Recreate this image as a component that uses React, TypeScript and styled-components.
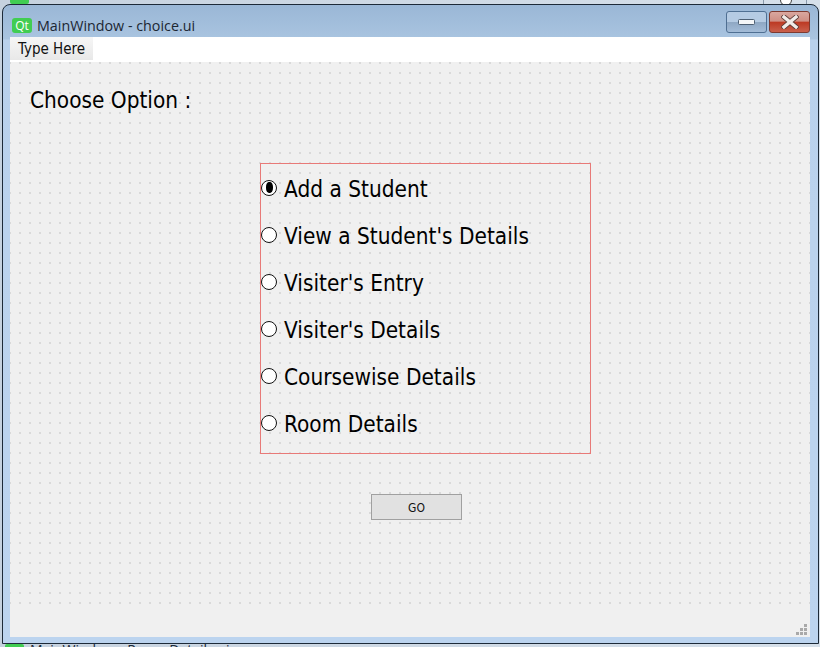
import styled, { createGlobalStyle } from "styled-components";

const GlobalStyle = createGlobalStyle`
  html, body {
    margin: 0;
    padding: 0;
    background: #d9e4ef;
  }
`;

const options = [
  "Add a Student",
  "View a Student's Details",
  "Visiter's Entry",
  "Visiter's Details",
  "Coursewise Details",
  "Room Details",
];

const Desktop = styled.div`
  position: relative;
  width: 820px;
  height: 647px;
  box-sizing: border-box;
  padding: 4px 1px 3px 2px;
  overflow: hidden;
  background: linear-gradient(90deg, #c6d2df, #d6e0ea);
`;

const BehindIcon = styled.div`
  position: absolute;
  left: 10px;
  top: -6px;
  width: 19px;
  height: 10px;
  border-radius: 2px;
  background: #41cd52;
`;

const BehindTitle = styled.div`
  position: absolute;
  left: 30px;
  top: 640px;
  font: 14px "Open Sans", sans-serif;
  color: #1a2a3a;
  white-space: nowrap;
`;

const BehindBadge = styled(BehindIcon)`
  top: 644px;
  left: 5px;
`;

const BehindTab = styled.div`
  position: absolute;
  left: 763px;
  top: 0;
  width: 42px;
  height: 4px;
  border-left: 1px solid #8a9aab;
  border-right: 1px solid #8a9aab;
`;

const BehindClose = styled.div`
  position: absolute;
  left: 780px;
  top: -6px;
  width: 10px;
  height: 10px;
  border: 1px solid #444;
  border-radius: 50%;
  background: #fff;
`;

const Frame = styled.div`
  position: relative;
  z-index: 1;
  height: 100%;
  box-sizing: border-box;
  display: flex;
  flex-direction: column;
  padding: 0 8px 6px 7px;
  border: 1px solid #1d2a38;
  border-radius: 8px 8px 0 0;
  background: linear-gradient(180deg, #9ab7d6 0, #a9c4e0 34px, #b9d1ec 35px, #bcd4ef 100%);
`;

const TitleBar = styled.div`
  height: 32px;
  flex-shrink: 0;
  display: flex;
  align-items: center;
  padding: 9px 0 0 2px;
  box-sizing: border-box;
`;

const QtBadge = styled.span`
  width: 20px;
  height: 15px;
  margin-right: 5px;
  border-radius: 3px;
  background: #41cd52;
  color: #fff;
  font: 12px "Open Sans", sans-serif;
  display: flex;
  align-items: center;
  justify-content: center;
`;

const WindowTitle = styled.span`
  font: 14.3px "Open Sans", sans-serif;
  color: #1c2733;
  flex: 1;
`;

const CaptionButtons = styled.div`
  display: flex;
  gap: 2px;
  margin-top: -7px;
`;

const MinButton = styled.div`
  width: 41px;
  height: 22px;
  box-sizing: border-box;
  border: 1px solid #4f6f92;
  border-radius: 3px;
  background: linear-gradient(180deg, #b5cbe3 0, #b5cbe3 48%, #8fa8c4 52%, #a3bcd8 100%);
  display: flex;
  align-items: center;
  justify-content: center;
`;

const CloseButton = styled(MinButton)`
  border-color: #7d3a30;
  background: linear-gradient(180deg, #d9a79f 0, #cf8f84 45%, #bd3a24 52%, #c9604c 100%);
`;

const Menu = styled.div`
  height: 25px;
  flex-shrink: 0;
  background: #fff;
  display: flex;
`;

const MenuItem = styled.div`
  width: 83px;
  box-sizing: border-box;
  padding: 3px 0 0 8px;
  height: 23px;
  background: linear-gradient(180deg, #f6f6f6, #e8e8e8);
  font: 15px "DejaVu Sans Condensed", "DejaVu Sans", sans-serif;
  color: #111;
`;

const Canvas = styled.div`
  flex: 1;
  display: flex;
  flex-direction: column;
  padding: 0 20px;
  background-color: #f0f0f0;
  background-image: radial-gradient(circle at 1px 1px, #c2c2c2 0.5px, transparent 0.9px);
  background-size: 10px 10px;
  background-position: -1px 0;
`;

const Heading = styled.h1`
  margin: 23px 0 0;
  font: 400 22.4px/30px "DejaVu Sans Condensed", "DejaVu Sans", sans-serif;
  color: #000;
`;

const OptionBox = styled.div`
  width: 331px;
  height: 291px;
  box-sizing: border-box;
  margin: 48px 0 0 230px;
  border: 1px solid #e87a78;
  display: flex;
  flex-direction: column;
`;

const OptionRow = styled.label`
  height: 47px;
  display: flex;
  align-items: center;
  flex-shrink: 0;
  font: 22.4px "DejaVu Sans Condensed", "DejaVu Sans", sans-serif;
  color: #000;
`;

const OptionText = styled.span`
  margin-top: 2px;
  letter-spacing: 0.02px;
`;

const Dot = styled.span`
  width: 14px;
  height: 14px;
  margin: 0 7px 0 0;
  border: 1px solid #111;
  border-radius: 50%;
  background: #fff;
  display: flex;
  align-items: center;
  justify-content: center;
`;

const DotFill = styled.span`
  width: 7px;
  height: 11px;
  border-radius: 3px 3px 3px 3px / 5px;
  background: #000;
`;

const GoButton = styled.button`
  width: 91px;
  height: 26px;
  margin: 40px 0 0 341px;
  padding: 2px 0 0;
  border: 1px solid #a0a0a0;
  background: #e1e1e1;
  font: 12px "DejaVu Sans Condensed", "DejaVu Sans", sans-serif;
  color: #111;
`;

const StatusBar = styled.div`
  position: relative;
  height: 25px;
  flex-shrink: 0;
  background: #f0f0f0;
`;

const Grip = styled.svg`
  position: absolute;
  right: 3px;
  bottom: 2px;
`;

export default function App() {
  return (
    <Desktop>
      <GlobalStyle />
      <BehindIcon />
      <BehindTab />
      <BehindClose />
      <BehindBadge />
      <BehindTitle>MainWindow - Room Details.ui</BehindTitle>
      <Frame>
        <TitleBar>
          <QtBadge>Qt</QtBadge>
          <WindowTitle>MainWindow - choice.ui</WindowTitle>
          <CaptionButtons>
            <MinButton>
              <svg width="17" height="6" viewBox="0 0 17 6">
                <rect x="0.5" y="0.5" width="16" height="5" rx="1" fill="#f4f6f8" stroke="#4d5f73" />
              </svg>
            </MinButton>
            <CloseButton>
              <svg width="18" height="14" viewBox="0 0 18 14">
                <path d="M3 2 L15 12 M15 2 L3 12" stroke="#5a3a36" strokeWidth="5" strokeLinecap="square" />
                <path d="M3 2 L15 12 M15 2 L3 12" stroke="#f1ebe8" strokeWidth="3.4" strokeLinecap="square" />
              </svg>
            </CloseButton>
          </CaptionButtons>
        </TitleBar>
        <Menu>
          <MenuItem>Type Here</MenuItem>
        </Menu>
        <Canvas>
          <Heading>Choose Option :</Heading>
          <OptionBox>
            {options.map((option, index) => (
              <OptionRow key={option}>
                <Dot>{index === 0 && <DotFill />}</Dot>
                <OptionText>{option}</OptionText>
              </OptionRow>
            ))}
          </OptionBox>
          <GoButton>GO</GoButton>
        </Canvas>
        <StatusBar>
          <Grip width="11" height="11" viewBox="0 0 11 11" fill="#a9a9a9">
            <rect x="8" y="0" width="3" height="3" />
            <rect x="4" y="4" width="3" height="3" />
            <rect x="8" y="4" width="3" height="3" />
            <rect x="0" y="8" width="3" height="3" />
            <rect x="4" y="8" width="3" height="3" />
            <rect x="8" y="8" width="3" height="3" />
          </Grip>
        </StatusBar>
      </Frame>
    </Desktop>
  );
}
